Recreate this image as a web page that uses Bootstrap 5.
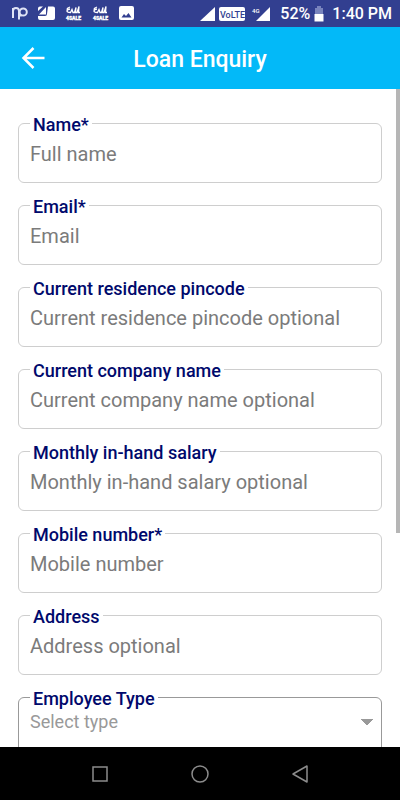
<!DOCTYPE html>
<html lang="en">
<head>
<meta charset="utf-8">
<meta name="viewport" content="width=device-width, initial-scale=1">
<title>Loan Enquiry</title>
<link href="https://cdn.jsdelivr.net/npm/bootstrap@5.3.0/dist/css/bootstrap.min.css" rel="stylesheet">
<style>
body { font-family: Roboto, "Liberation Sans", sans-serif; background: #fff; }
.status-bar { height: 27px; background: #323f90; font-size: 16px; line-height: 28px; font-weight: 500; }
.status-bar svg { display: block; flex: none; }
.app-bar { height: 62px; background: #03b9f8; padding: 0 20px; }
.app-bar h1 { font-size: 23px; line-height: 28px; font-weight: 500; padding-top: 3px; }
.back-slot { width: 26px; }
.enquiry-form { padding: 34px 18px 0; gap: 22px; }
.field { border: 1px solid #cecece; border-radius: 6px; height: 60px; padding: 0 7px 0 11px; }
.field-dark { border-color: #999; }
.field label { margin-top: -10px; padding: 0 3px; background: #fff; color: #00096c; font-size: 18px; line-height: 22px; font-weight: 500; }
.field .form-control, .field .form-select { border: 0; border-radius: 0; padding: 0; margin-top: 3px; height: 30px; line-height: 30px; font-size: 20px; color: #7b7b7b; background-color: transparent; }
.field .form-control::placeholder { color: #7b7b7b; opacity: 1; }
.field .form-select { font-size: 18px; height: 24px; line-height: 24px; margin-top: 0; color: #999;
  background-image: linear-gradient(to bottom right, #999 50%, transparent 51%), linear-gradient(to bottom left, #999 50%, transparent 51%);
  background-size: 6px 6px; background-position: right 0 center, right 6px center; }
.field .form-select { background-position: right 1px center, right 7px center; }
.scroll-thumb { width: 4px; height: 67.5%; background: #b6b6b6; }
.nav-keys { height: 53px; background: #000; gap: 76px; }
</style>
<script src="https://cdn.jsdelivr.net/npm/bootstrap@5.3.0/dist/js/bootstrap.bundle.min.js"></script>
</head>
<body class="vh-100 d-flex flex-column overflow-hidden">
<div class="status-bar d-flex align-items-center justify-content-between text-white flex-shrink-0">
  <svg width="140" height="27" viewBox="0 0 140 27" fill="#fff" aria-hidden="true">
    <g fill="none" stroke="#dfe3f5" stroke-width="2">
      <path d="M13 18V8M13 11Q13 8 16 8Q19 8 19 11V19.500"/>
      <circle cx="23.200" cy="12" r="3.600"/><path d="M19 12V14Q19 16 21.500 15.500"/>
    </g>
    <path d="M48 6.500H53Q55 6.500 55 8.500V18Q55 20 53 20H40Q38 20 38 18V16H45Q47 16 47 14Z"/>
    <path d="M39 14.500L46 7V14.500ZM38 11V8.500Q38 6.500 40 6.500H43Z"/>
    <g id="sale">
      <path d="M67 9.500Q67 8 70 7M70 9Q67 9.500 67 11T70.500 12.500L72 9.500L73 12.500H74.500L76 7.500L75.500 12.500H77L79 6.500L78.500 12.500H80" fill="none" stroke="#fff" stroke-width="1.300"/>
      <text x="66" y="19.500" font-size="5" font-weight="900" stroke="#fff" stroke-width="0.300" font-family="Roboto, sans-serif">4SALE</text>
    </g>
    <use href="#sale" x="27"/>
    <path fill-rule="evenodd" d="M121 6H132Q134 6 134 8V18Q134 20 132 20H121Q119 20 119 18V8Q119 6 121 6ZM121.500 17.500H131.500L128.500 13L126 16L124 14Z"/>
  </svg>
  <div class="d-flex align-items-center pe-2">
    <svg width="80" height="27" viewBox="0 0 80 27" fill="#fff" aria-hidden="true">
      <path d="M0 21L15 7V21Z"/>
      <rect x="19" y="7" width="26" height="14" rx="2"/>
      <text x="20" y="17.500" font-size="9" font-weight="500" fill="#323f90" font-family="Roboto, sans-serif">VoLTE</text>
      <text x="52" y="13" font-size="6" font-family="Roboto, sans-serif">4G</text>
      <path d="M56 21L70 7V21Z"/>
    </svg>
    <span>52%</span>
    <svg class="ms-1" width="10" height="17" viewBox="0 0 10 17" aria-hidden="true"><path fill="#7984bd" d="M3 1H7V3H9V9H1V3H3Z"/><path fill="#fff" d="M0.500 9H9.500V16.500H0.500Z"/></svg>
    <span class="ms-2">1:40 PM</span>
  </div>
</div>
<header class="app-bar d-flex align-items-center justify-content-between text-white flex-shrink-0">
  <button type="button" class="btn p-0 border-0 back-slot text-white" aria-label="Back">
    <svg class="d-block" width="26" height="24" viewBox="0 0 26 24" fill="none" stroke="currentColor" stroke-width="2.500"><path d="M24.500 12H4M13.500 2L3.500 12L13.500 22"/></svg>
  </button>
  <h1 class="m-0">Loan Enquiry</h1>
  <span class="back-slot"></span>
</header>
<main class="position-relative flex-grow-1 overflow-hidden">
  <form class="enquiry-form d-flex flex-column">
    <div class="field d-flex flex-column align-items-start"><label for="name">Name*</label><input class="form-control shadow-none" id="name" type="text" placeholder="Full name"></div>
    <div class="field d-flex flex-column align-items-start"><label for="email">Email*</label><input class="form-control shadow-none" id="email" type="email" placeholder="Email"></div>
    <div class="field d-flex flex-column align-items-start"><label for="pincode">Current residence pincode</label><input class="form-control shadow-none" id="pincode" type="text" placeholder="Current residence pincode optional"></div>
    <div class="field d-flex flex-column align-items-start"><label for="company">Current company name</label><input class="form-control shadow-none" id="company" type="text" placeholder="Current company name optional"></div>
    <div class="field d-flex flex-column align-items-start"><label for="salary">Monthly in-hand salary</label><input class="form-control shadow-none" id="salary" type="text" placeholder="Monthly in-hand salary optional"></div>
    <div class="field d-flex flex-column align-items-start"><label for="mobile">Mobile number*</label><input class="form-control shadow-none" id="mobile" type="tel" placeholder="Mobile number"></div>
    <div class="field d-flex flex-column align-items-start"><label for="address">Address</label><input class="form-control shadow-none" id="address" type="text" placeholder="Address optional"></div>
    <div class="field field-dark d-flex flex-column align-items-start"><label for="employee">Employee Type</label><select class="form-select shadow-none" id="employee"><option>Select type</option></select></div>
  </form>
  <div class="scroll-thumb position-absolute top-0 end-0"></div>
</main>
<nav class="nav-keys d-flex align-items-center justify-content-center flex-shrink-0" aria-label="System">
  <button type="button" class="btn p-0 border-0" aria-label="Recent apps"><svg class="d-block" width="24" height="24" viewBox="0 0 24 24" fill="none" stroke="#8c8c8c" stroke-width="1.500"><rect x="5" y="5" width="14" height="14"/></svg></button>
  <button type="button" class="btn p-0 border-0" aria-label="Home"><svg class="d-block" width="24" height="24" viewBox="0 0 24 24" fill="none" stroke="#8c8c8c" stroke-width="1.500"><circle cx="12" cy="12" r="8"/></svg></button>
  <button type="button" class="btn p-0 border-0" aria-label="Back key"><svg class="d-block" width="24" height="24" viewBox="0 0 24 24" fill="none" stroke="#8c8c8c" stroke-width="1.500" stroke-linejoin="round"><path d="M19 4V20L5 12Z"/></svg></button>
</nav>
</body>
</html>
